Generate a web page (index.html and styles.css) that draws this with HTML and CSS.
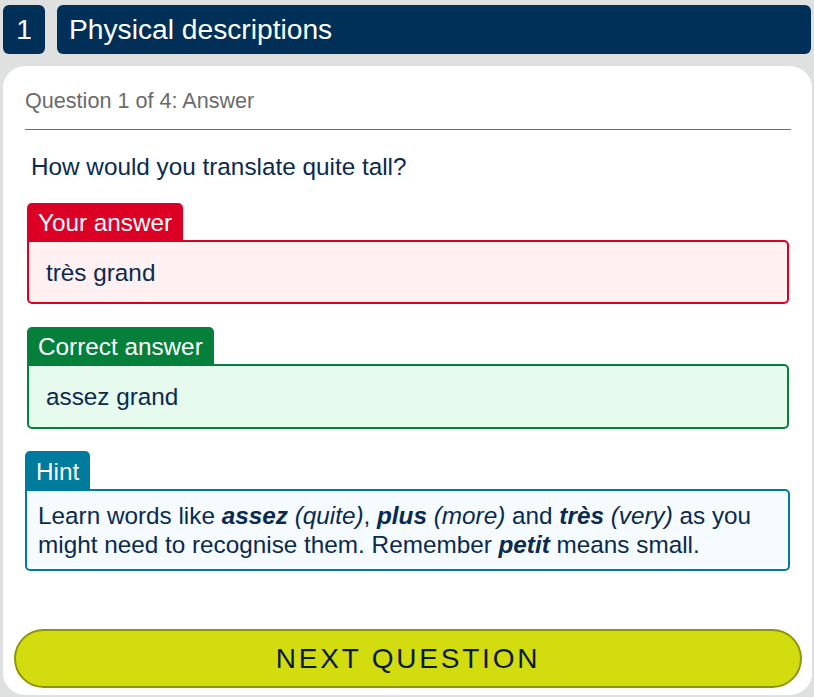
FILE: index.html
```html
<!DOCTYPE html>
<html lang="en">
<head>
<meta charset="utf-8">
<title>Physical descriptions</title>
<link rel="stylesheet" href="styles.css">
</head>
<body>
<header class="topbar">
  <div class="num">1</div>
  <h1 class="title">Physical descriptions</h1>
</header>
<main class="card">
  <div class="content">
    <div class="qhead">Question 1 of 4: Answer</div>
    <p class="question">How would you translate quite tall?</p>
    <section class="block wrong">
      <div class="tab">Your answer</div>
      <div class="box">très grand</div>
    </section>
    <section class="block right">
      <div class="tab">Correct answer</div>
      <div class="box">assez grand</div>
    </section>
    <section class="block hint">
      <div class="tab">Hint</div>
      <div class="box">Learn words like <b><i>assez</i></b> <i>(quite)</i>, <b><i>plus</i></b> <i>(more)</i> and <b><i>très</i></b> <i>(very)</i> as you might need to recognise them. Remember <b><i>petit</i></b> means small.</div>
    </section>
  </div>
  <div class="footer">
    <button class="next">NEXT QUESTION</button>
  </div>
</main>
</body>
</html>
```
FILE: styles.css
```css
* { box-sizing: border-box; }
html, body { margin: 0; padding: 0; }
body {
  background: #dfe0e0;
  font-family: "Liberation Sans", Arial, sans-serif;
  color: #0b2a50;
  width: 814px;
  height: 697px;
  overflow: hidden;
}
.topbar {
  display: flex;
  gap: 12px;
  padding: 5px 3px 0 3px;
}
.num, .title {
  background: #003057;
  color: #ffffff;
  height: 49px;
  line-height: 49px;
  font-size: 28.2px;
  font-weight: normal;
  border-radius: 6px;
  margin: 0;
}
.num {
  width: 42px;
  text-align: center;
}
.title {
  flex: 1;
  padding-left: 12px;
}
.card {
  margin: 12px 2px 0 3px;
  background: #ffffff;
  border-radius: 22px;
  padding-bottom: 7px;
}
.content {
  padding: 22px 21px 0 22px;
}
.qhead {
  font-size: 21.6px;
  line-height: 25px;
  color: #6b6b6b;
  padding-bottom: 16px;
  border-bottom: 1px solid #707070;
}
.question {
  margin: 22px 0 0 6px;
  font-size: 24.3px;
  line-height: 29px;
}
.block {
  margin: 22px 2px 0 2px;
  font-size: 24.3px;
  line-height: 29px;
}
.block + .block { margin-top: 23px; }
.tab {
  display: inline-block;
  vertical-align: top;
  color: #ffffff;
  padding: 5px 11px 3px 11px;
  border-radius: 5px 5px 0 0;
}
.box {
  border: 2px solid;
  border-radius: 0 5px 5px 5px;
  padding: 16px 17px 16px 17px;
}
.wrong .box { padding-bottom: 15px; }
.wrong .tab { background: #dc0024; }
.wrong .box { border-color: #dc0024; background: #fff0f2; }
.right .tab { background: #05803a; }
.right .box { border-color: #05803a; background: #e6faee; }
.block.hint { margin: 22px 1px 0 0; }
.hint .tab { background: #007b9d; padding-top: 6px; }
.hint .box { border-color: #007b9d; background: #f5fbfe; padding: 10px 11px 10px 11px; }
.hint b { font-weight: bold; }
.footer {
  padding: 58px 10px 0 11px;
}
.next {
  display: block;
  width: 100%;
  height: 59px;
  background: #d2dc0e;
  border: 2px solid #8c9608;
  border-radius: 30px;
  font-family: "Liberation Sans", Arial, sans-serif;
  font-size: 28px;
  letter-spacing: 0.1em;
  color: #0b1a33;
  padding: 0;
  cursor: pointer;
}
```
